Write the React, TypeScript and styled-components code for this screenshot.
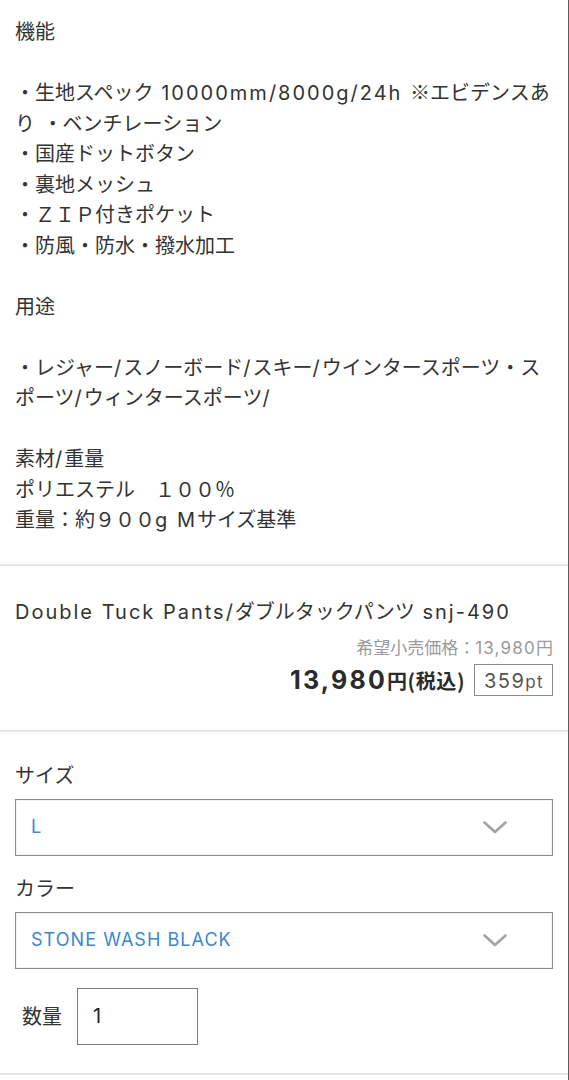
import React from "react";
import styled, { createGlobalStyle } from "styled-components";

const GlobalStyle = createGlobalStyle`
  html, body {
    margin: 0;
    padding: 0;
    background: #ffffff;
  }
  body {
    font-family: "Noto Sans CJK JP", sans-serif;
    color: #333333;
  }
  * { box-sizing: border-box; }
`;

const Page = styled.div`
  width: 569px;
  min-height: 1080px;
  border-right: 1px solid #5c5c5c;
  background: #ffffff;
`;

const Section = styled.section<{ $top?: number; $bottom?: number; $divider?: boolean; $closing?: boolean }>`
  padding: ${(p) => p.$top ?? 0}px 15px ${(p) => p.$bottom ?? 0}px 15px;
  border-top: ${(p) => (p.$divider ? "2px solid #e6e6e6" : "none")};
  border-bottom: ${(p) => (p.$closing ? "2px solid #e6e6e6" : "none")};
`;

const Latin = styled.span<{ $ls?: number }>`
  font-family: Inter, "Noto Sans CJK JP", sans-serif;
  letter-spacing: ${(p) => p.$ls ?? 2}px;
  line-height: 1;
`;

const Mixed = ({ text, ls }: { text: string; ls?: number }) => (
  <>
    {text.split(/([\x20-\x7E]+)/).map((part, i) =>
      /^[\x20-\x7E]+$/.test(part) ? (
        <Latin key={i} $ls={ls}>
          {part}
        </Latin>
      ) : (
        <React.Fragment key={i}>{part}</React.Fragment>
      )
    )}
  </>
);

const Description = styled.p`
  margin: 0;
  font-size: 20px;
  line-height: 30.5px;
  color: #333333;
`;

const Title = styled.h1`
  margin: 0;
  font-size: 20px;
  font-weight: 400;
  line-height: 30px;
  color: #333333;
`;

const Msrp = styled.div`
  margin-top: 9px;
  text-align: right;
  font-size: 17px;
  line-height: 24px;
  color: #9a9a9a;
`;

const PriceRow = styled.div`
  margin-top: 5px;
  display: flex;
  justify-content: flex-end;
  align-items: center;
  gap: 9px;
`;

const Price = styled.span`
  font-family: Inter, "Noto Sans CJK JP", sans-serif;
  font-weight: 700;
  color: #2b2b2b;
  font-size: 25px;
  line-height: 32px;
  letter-spacing: 2.2px;
`;

const PriceUnit = styled.span`
  font-family: "Noto Sans CJK JP", sans-serif;
  font-size: 20px;
  font-weight: 700;
  letter-spacing: 0.6px;
`;

const PointBox = styled.span`
  display: inline-flex;
  align-items: baseline;
  height: 32px;
  padding: 3px 8px 0 9px;
  border: 1px solid #8a8a8a;
  color: #555555;
  font-family: Inter, sans-serif;
  font-size: 20px;
  line-height: 26px;
  letter-spacing: 1.4px;
`;

const PointUnit = styled.span`
  font-size: 17px;
`;

const FieldLabel = styled.div<{ $gapTop?: number }>`
  margin-top: ${(p) => p.$gapTop ?? 0}px;
  font-size: 20px;
  line-height: 28px;
  color: #333333;
`;

const SelectBox = styled.div`
  margin-top: 10px;
  height: 57px;
  display: flex;
  align-items: center;
  justify-content: space-between;
  padding: 0 45px 0 15px;
  border: 1px solid #8c8c8c;
  box-shadow: inset 0 0 0 1px #f2f2f2;
  background: #ffffff;
`;

const SelectValue = styled.span`
  font-family: Inter, sans-serif;
  color: #3a88d2;
  font-size: 18px;
  line-height: 24px;
  letter-spacing: 1.05px;
`;

const QtyRow = styled.div`
  margin-top: 19px;
  display: flex;
  align-items: center;
  gap: 15px;
  padding-left: 7px;
`;

const QtyLabel = styled.span`
  font-size: 20px;
  line-height: 28px;
  color: #333333;
`;

const QtyInput = styled.input`
  width: 121px;
  height: 57px;
  border: 1px solid #7a7a7a;
  border-radius: 0;
  padding: 0 0 0 15px;
  font-family: Inter, sans-serif;
  font-size: 20px;
  color: #222222;
  background: #ffffff;
  outline: none;
`;

const Chevron = () => (
  <svg width="24" height="13" viewBox="0 0 24 13" fill="none">
    <path d="M1.5 1.5 L12 11 L22.5 1.5" stroke="#a3a3a3" strokeWidth="2.6" strokeLinecap="round" strokeLinejoin="round" />
  </svg>
);

const descLines: string[] = [
  "機能",
  "",
  "・生地スペック 10000mm/8000g/24h ※エビデンスあり ・ベンチレーション",
  "・国産ドットボタン",
  "・裏地メッシュ",
  "・ＺＩＰ付きポケット",
  "・防風・防水・撥水加工",
  "",
  "用途",
  "",
  "・レジャー/スノーボード/スキー/ウインタースポーツ・スポーツ/ウィンタースポーツ/",
  "",
  "素材/重量",
  "ポリエステル　１００％",
  "重量：約９００g Mサイズ基準",
];

export default function App() {
  return (
    <>
      <GlobalStyle />
      <Page>
        <Section $top={16} $bottom={29}>
          <Description>
            {descLines.map((line, i) => (
              <React.Fragment key={i}>
                {i > 0 && <br />}
                <Mixed text={line} />
              </React.Fragment>
            ))}
          </Description>
        </Section>

        <Section $divider $top={30} $bottom={33}>
          <Title>
            <Mixed text="Double Tuck Pants/ダブルタックパンツ snj-490" ls={2} />
          </Title>
          <Msrp>
            <Mixed text="希望小売価格：13,980円" ls={1.2} />
          </Msrp>
          <PriceRow>
            <Price>
              13,980<PriceUnit>円(税込)</PriceUnit>
            </Price>
            <PointBox>
              359<PointUnit>pt</PointUnit>
            </PointBox>
          </PriceRow>
        </Section>

        <Section $divider $closing $top={29} $bottom={28}>
          <FieldLabel>サイズ</FieldLabel>
          <SelectBox>
            <SelectValue>L</SelectValue>
            <Chevron />
          </SelectBox>
          <FieldLabel $gapTop={18}>カラー</FieldLabel>
          <SelectBox>
            <SelectValue>STONE WASH BLACK</SelectValue>
            <Chevron />
          </SelectBox>
          <QtyRow>
            <QtyLabel>数量</QtyLabel>
            <QtyInput defaultValue="1" />
          </QtyRow>
        </Section>
      </Page>
    </>
  );
}
